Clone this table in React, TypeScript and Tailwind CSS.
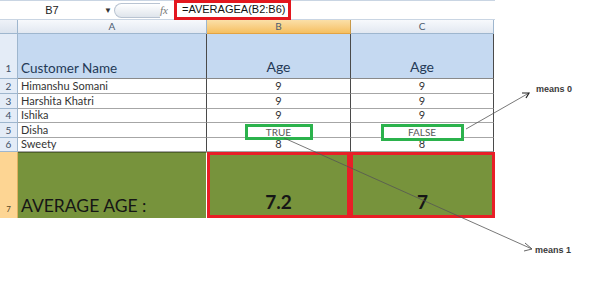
import React from "react";

const rows = [
  { n: 2, name: "Himanshu Somani", b: "9", c: "9" },
  { n: 3, name: "Harshita Khatri", b: "9", c: "9" },
  { n: 4, name: "Ishika", b: "9", c: "9" },
  { n: 5, name: "Disha", b: "TRUE", c: "FALSE" },
  { n: 6, name: "Sweety", b: "8", c: "8" },
];

const heights = ["h-[15px]", "h-[15px]", "h-[14px]", "h-[15px]", "h-[14px]"];

function RowNum({ n, className = "" }: { n: number; className?: string }) {
  return (
    <div
      className={`w-[18px] shrink-0 flex items-center justify-center border-r border-b border-[#9eb6ce] bg-[#e4ecf7] text-[10px] text-[#3e4f66] ${className}`}
    >
      {n}
    </div>
  );
}

function Cell({ value, col }: { value: string; col: "b" | "c" }) {
  const w = col === "b" ? "w-[144px]" : "w-[143px]";
  if (value === "TRUE" || value === "FALSE") {
    const box = value === "TRUE" ? "w-[68px] h-[16px]" : "w-[83px] h-[17px]";
    return (
      <div className={`${w} shrink-0 relative flex justify-center border-r border-b border-r-[#4a4a4a] border-b-[#a6a6a6]`}>
        <div
          className={`${box} mt-[1px] flex items-center justify-center border-[3px] border-[#2bb24c] bg-white text-[10px] text-[#595959]`}
        >
          {value}
        </div>
      </div>
    );
  }
  return (
    <div
      className={`${w} shrink-0 flex items-center justify-center border-r border-b border-r-[#4a4a4a] border-b-[#a6a6a6] text-[11px] text-[#333]`}
    >
      {value}
    </div>
  );
}

export default function App() {
  return (
    <div className="relative w-[600px] h-[290px] overflow-hidden bg-white font-['Lato','Liberation_Sans',sans-serif]">
      {/* formula bar */}
      <div className="flex h-[20px] w-[495px] items-center border-t border-b border-[#c9d5e3]">
        <div className="w-[104px] text-center text-[11px] text-[#222] font-['Liberation_Sans',sans-serif]">B7</div>
        <div className="w-[10px] text-[8px] text-[#333] leading-none">▼</div>
        <div className="h-[15px] w-[46px] rounded-l-full border border-r-0 border-[#b9c4d2] bg-gradient-to-b from-[#ffffff] to-[#dfe5ec]" />
        <div className="w-[14px] text-[11px] italic font-['Liberation_Serif',serif] text-[#777]">fx</div>
        <div className="h-[20px] w-[117px] -mt-[1px] border-[3px] border-[#e3171f] pl-[5px] flex items-center text-[11px] text-[#111] font-['Liberation_Sans',sans-serif]">
          =AVERAGEA(B2:B6)
        </div>
      </div>

      {/* column headers */}
      <div className="flex h-[14px]">
        <div className="relative w-[18px] shrink-0 border-r border-b border-[#9eb6ce] bg-gradient-to-b from-[#eef2f8] to-[#dbe3ee]">
          <div className="absolute right-[2px] bottom-[2px] h-0 w-0 border-l-[9px] border-t-[9px] border-l-transparent border-t-transparent border-b-0 border-r-[9px] border-r-transparent border-b-[#b7c3d1]" />
        </div>
        <div className="w-[189px] shrink-0 flex items-center justify-center border-r border-b border-[#9eb6ce] bg-gradient-to-b from-[#f7f9fc] to-[#e2e8f1] text-[10px] text-[#4d5d70]">
          A
        </div>
        <div className="w-[144px] shrink-0 flex items-center justify-center border-r border-b border-r-[#c99a4a] border-b-[#e2a343] bg-gradient-to-b from-[#fbe0a8] to-[#f5bf5f] text-[10px] text-[#4d5d70]">
          B
        </div>
        <div className="w-[143px] shrink-0 flex items-center justify-center border-r border-b border-[#9eb6ce] bg-gradient-to-b from-[#f7f9fc] to-[#e2e8f1] text-[10px] text-[#4d5d70]">
          C
        </div>
      </div>

      {/* row 1 */}
      <div className="flex h-[45px]">
        <div className="w-[18px] shrink-0 flex items-end justify-center pb-[2px] border-r border-b border-[#9eb6ce] bg-[#e4ecf7] text-[10px] text-[#3e4f66]">
          1
        </div>
        <div className="w-[189px] shrink-0 flex items-end pl-[3px] pb-[3px] border-r border-b border-r-[#4a4a4a] border-b-[#8a8a8a] bg-[#c5d9f1] text-[13.5px] leading-none text-[#243a57]">
          Customer Name
        </div>
        <div className="w-[144px] shrink-0 flex items-end justify-center pb-[4px] border-r border-b border-r-[#4a4a4a] border-b-[#8a8a8a] bg-[#c5d9f1] text-[14px] leading-none text-[#243a57]">
          Age
        </div>
        <div className="w-[143px] shrink-0 flex items-end justify-center pb-[4px] border-r border-b border-r-[#4a4a4a] border-b-[#8a8a8a] bg-[#c5d9f1] text-[14px] leading-none text-[#243a57]">
          Age
        </div>
      </div>

      {/* data rows */}
      {rows.map((r, i) => (
        <div key={r.n} className={`flex ${heights[i]}`}>
          <RowNum n={r.n} />
          <div className="w-[189px] shrink-0 flex items-center pl-[3px] border-r border-b border-r-[#4a4a4a] border-b-[#a6a6a6] text-[11px] text-[#333]">
            {r.name}
          </div>
          <Cell value={r.b} col="b" />
          <Cell value={r.c} col="c" />
        </div>
      ))}

      {/* row 7 */}
      <div className="flex h-[66px]">
        <div className="w-[18px] shrink-0 flex items-end justify-center pb-[3px] border-r border-[#e0b060] bg-[#fdd593] text-[8px] text-[#5a4a2a]">
          7
        </div>
        <div className="w-[189px] shrink-0 flex items-end pl-[3px] pb-[4px] border-t border-t-[#4f6228] border-r border-r-white bg-[#77933c] text-[17.5px] leading-none text-[#161616]">
          AVERAGE AGE :
        </div>
        <div className="w-[143px] shrink-0 flex items-end justify-center pb-[4px] border-[3px] border-[#e81f27] bg-[#77933c] text-[19px] font-bold leading-none text-[#161616]">
          7.2
        </div>
        <div className="w-[145px] shrink-0 flex items-end justify-center pb-[4px] border-[3px] border-[#e81f27] bg-[#77933c] text-[19px] font-bold leading-none text-[#161616]">
          7
        </div>
      </div>

      {/* annotations */}
      <svg className="absolute inset-0 pointer-events-none" width="600" height="290" viewBox="0 0 600 290">
        <line x1="466" y1="129" x2="529" y2="93" stroke="#555" strokeWidth="0.8" />
        <path d="M522 93 L529 93 L526 98" fill="none" stroke="#222" strokeWidth="1.2" />
        <line x1="284" y1="138" x2="532" y2="249" stroke="#555" strokeWidth="0.8" />
        <path d="M525 243 L532 249 L524 251" fill="none" stroke="#555" strokeWidth="0.9" />
      </svg>
      <div className="absolute left-[536px] top-[83px] text-[9px] font-bold text-[#3a3a3a] font-['Liberation_Sans',sans-serif]">
        means 0
      </div>
      <div className="absolute left-[535px] top-[244px] text-[9px] font-bold text-[#3a3a3a] font-['Liberation_Sans',sans-serif]">
        means 1
      </div>
    </div>
  );
}
